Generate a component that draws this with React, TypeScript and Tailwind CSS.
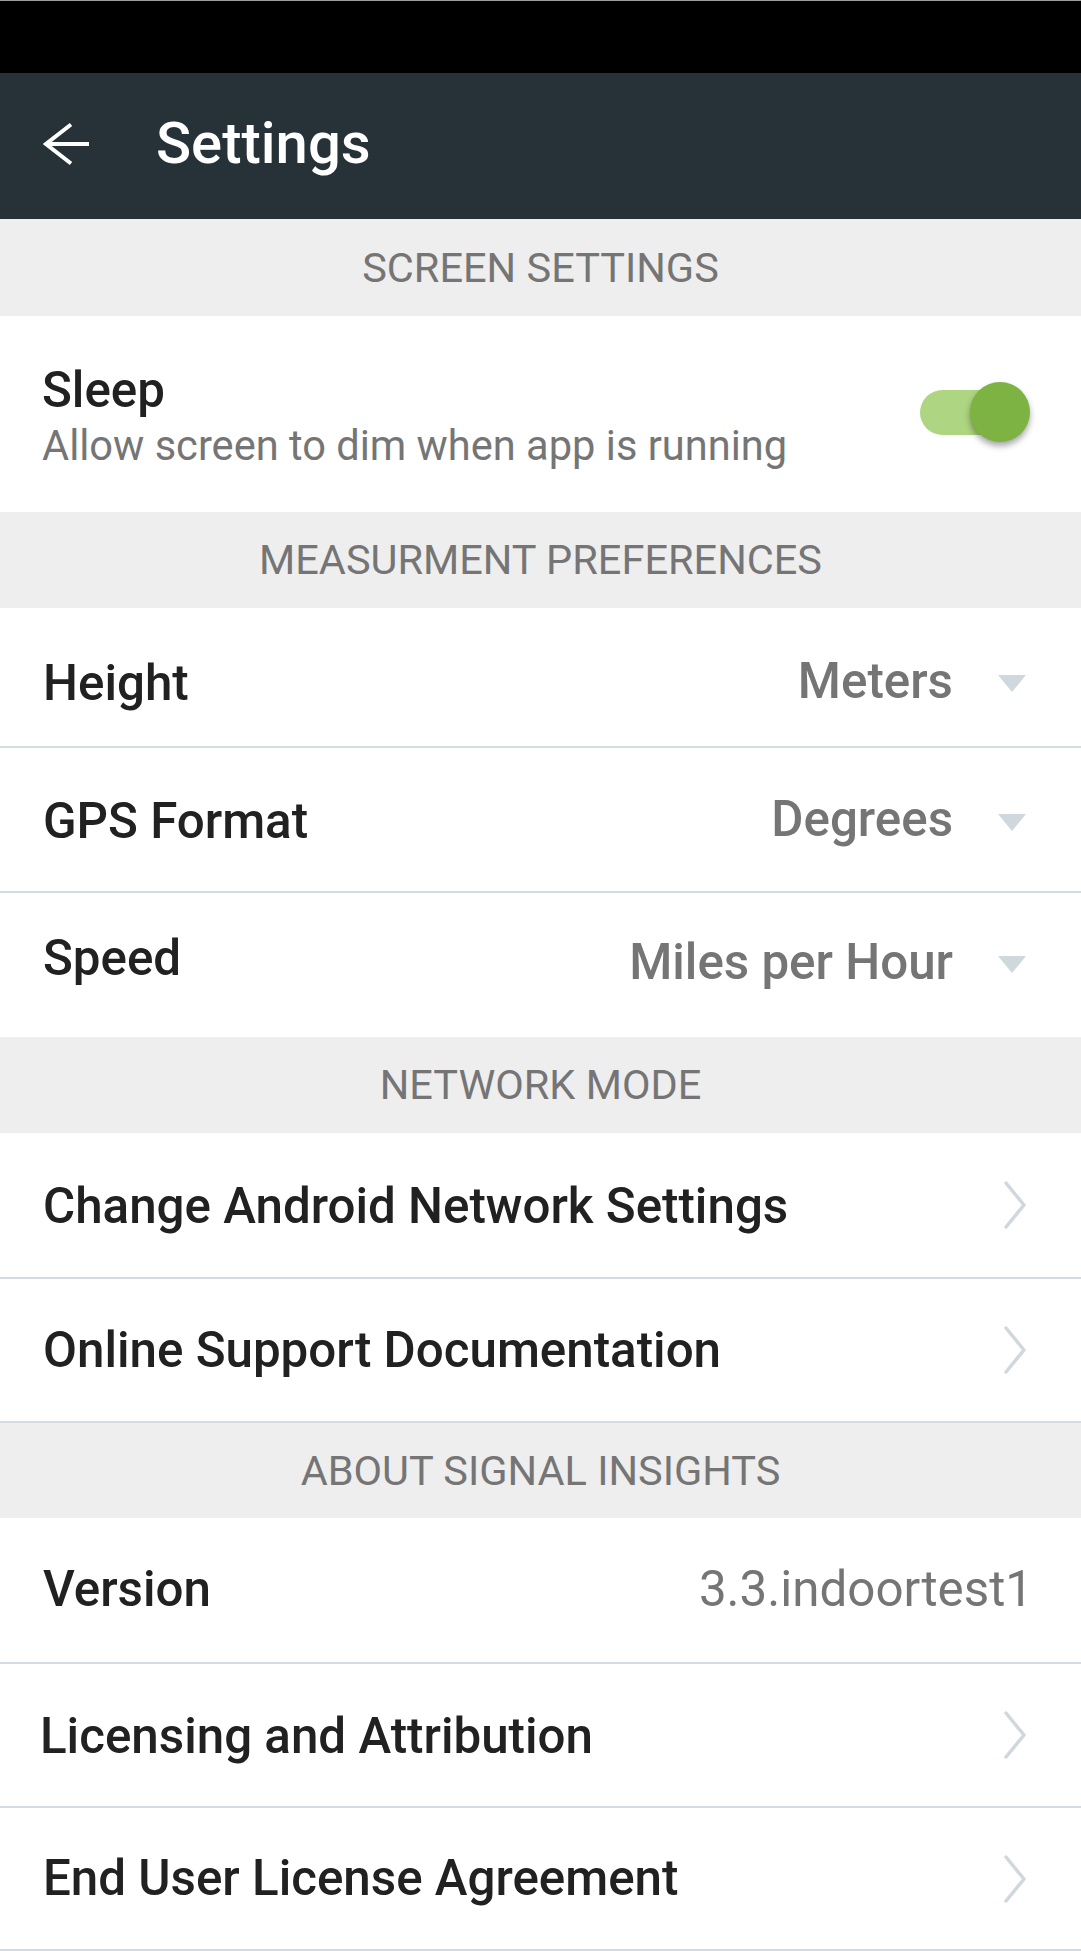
import React from "react";

const font = { fontFamily: "Roboto, 'Noto Sans', sans-serif" };

function Header({ title, h }: { title: string; h: string }) {
  return (
    <div className={`${h} bg-[#eeeeee] flex items-center justify-center text-[41.5px] leading-none text-[#757575]`}>
      {title}
    </div>
  );
}

function Triangle() {
  return (
    <svg width="28" height="17" viewBox="0 0 28 17" className="shrink-0">
      <polygon points="0,0 28,0 14,17" fill="#cfd8dc" />
    </svg>
  );
}

function Chevron() {
  return (
    <svg width="24" height="48" viewBox="0 0 24 48" className="shrink-0">
      <path d="M3 2 L21 24 L3 46" fill="none" stroke="#cfd8dc" strokeWidth="3.5" strokeLinecap="round" strokeLinejoin="round" />
    </svg>
  );
}

function Row({
  label,
  h,
  divider = true,
  children,
  labelPad = "pl-[43px]",
  shift = "",
}: {
  label: string;
  h: string;
  divider?: boolean;
  children?: React.ReactNode;
  labelPad?: string;
  shift?: string;
}) {
  return (
    <div className={`${h} ${divider ? "border-b-2 border-[#d3dce0]" : ""} bg-white flex items-center ${labelPad} ${shift}`}>
      <span className="text-[49.3px] leading-none font-medium text-[#212121] whitespace-nowrap">{label}</span>
      <div className="ml-auto flex items-center">{children}</div>
    </div>
  );
}

export default function App() {
  return (
    <div className="w-[1081px] min-h-[1951px] bg-white overflow-hidden" style={font}>
      {/* status bar */}
      <div className="h-px bg-[#9e9e9e]" />
      <div className="h-[72px] bg-black" />
      {/* toolbar */}
      <div className="h-[146px] bg-[#263238] flex items-center">
        <svg width="48" height="44" viewBox="0 0 48 44" className="ml-[43px] mb-[4px] shrink-0">
          <path d="M3 22 H46 M28 2.5 L3 22 L28 41.5" fill="none" stroke="#ffffff" strokeWidth="4" strokeLinejoin="miter" />
        </svg>
        <span className="ml-[65px] mb-[7px] text-[58px] leading-none font-medium text-white">Settings</span>
      </div>

      <Header title="SCREEN SETTINGS" h="h-[97px]" />

      {/* Sleep row */}
      <div className="h-[196px] bg-white flex items-center pl-[42px] pr-[51px]">
        <div className="flex flex-col mt-[4px]">
          <span className="text-[49.3px] leading-[58px] font-medium text-[#212121]">Sleep</span>
          <span className="mt-[2px] text-[41.6px] leading-[50px] text-[#757575]">Allow screen to dim when app is running</span>
        </div>
        <div className="ml-auto relative w-[110px] h-[61px] mb-[4px]">
          <div className="absolute left-0 top-[8px] w-[100px] h-[45px] rounded-full bg-[#aed581]" />
          <div className="absolute right-0 top-0 w-[60px] h-[60px] rounded-full bg-[#7cb342] shadow-[0_4px_6px_rgba(0,0,0,0.35)]" />
        </div>
      </div>

      <Header title="MEASURMENT PREFERENCES" h="h-[96px]" />

      <Row label="Height" h="h-[140px]" shift="pt-[14px]">
        <span className="text-[49.3px] leading-none font-medium text-[#757575] mr-[45px] mt-[-4px]">Meters</span>
        <div className="mr-[55px]"><Triangle /></div>
      </Row>
      <Row label="GPS Format" h="h-[145px]" shift="pt-[5px]">
        <span className="text-[49.3px] leading-none font-medium text-[#757575] mr-[45px] mt-[-4px]">Degrees</span>
        <div className="mr-[55px] mt-[2px]"><Triangle /></div>
      </Row>
      <Row label="Speed" h="h-[144px]" divider={false} shift="pb-[12px]">
        <span className="text-[49.3px] leading-none font-medium text-[#757575] mr-[45px] mt-[8px]">Miles per Hour</span>
        <div className="mr-[55px] mt-[12px]"><Triangle /></div>
      </Row>

      <Header title="NETWORK MODE" h="h-[96px]" />

      <Row label="Change Android Network Settings" h="h-[146px]" shift="pt-[3px]">
        <div className="mr-[54px] mt-[-3px]"><Chevron /></div>
      </Row>
      <Row label="Online Support Documentation" h="h-[144px]" shift="pt-[2px]">
        <div className="mr-[54px] mt-[-2px]"><Chevron /></div>
      </Row>

      <Header title="ABOUT SIGNAL INSIGHTS" h="h-[95px]" />

      <Row label="Version" h="h-[146px]">
        <span className="text-[49.3px] leading-none text-[#757575] mr-[48px]">3.3.indoortest1</span>
      </Row>
      <Row label="Licensing and Attribution" h="h-[144px]" labelPad="pl-[40px]" shift="pt-[3px]">
        <div className="mr-[54px] mt-[-3px]"><Chevron /></div>
      </Row>
      <Row label="End User License Agreement" h="h-[143px]">
        <div className="mr-[54px]"><Chevron /></div>
      </Row>
    </div>
  );
}
